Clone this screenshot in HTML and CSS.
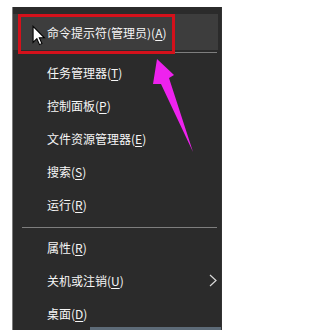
FILE: index.html
```html
<!DOCTYPE html>
<html>
<head>
<meta charset="utf-8">
<link rel="stylesheet" href="styles.css">
</head>
<body>
<div class="menu">
  <div class="item active"><span class="label">命令提示符(管理员)(<u>A</u>)</span></div>
  <div class="sep"></div>
  <div class="group">
    <div class="item"><span class="label">任务管理器(<u>T</u>)</span></div>
    <div class="item"><span class="label">控制面板(<u>P</u>)</span></div>
    <div class="item"><span class="label">文件资源管理器(<u>E</u>)</span></div>
    <div class="item"><span class="label">搜索(<u>S</u>)</span></div>
    <div class="item"><span class="label">运行(<u>R</u>)</span></div>
  </div>
  <div class="sep"></div>
  <div class="group">
    <div class="item"><span class="label">属性(<u>R</u>)</span></div>
    <div class="item"><span class="label">关机或注销(<u>U</u>)</span>
      <svg class="chev" width="8" height="13" viewBox="0 0 8 13"><polyline points="1,1 7,6.5 1,12" fill="none" stroke="#d8d8d8" stroke-width="1.2"/></svg>
    </div>
    <div class="item"><span class="label">桌面(<u>D</u>)</span></div>
  </div>
  <div class="taskbar"></div>
  <svg class="cursor" width="14" height="21" viewBox="0 0 13 19"><path d="M1 1 L1 16 L4.5 12.5 L7 18 L9.2 17 L6.8 11.6 L11.5 11.6 Z" fill="#fff" stroke="#000" stroke-width="1"/></svg>
  <div class="redbox"></div>
  <svg class="arrow" width="60" height="110" viewBox="0 0 60 110"><polygon points="12,4 29,20 24,23 48,97 16,29 8,29" fill="#ee22ee"/></svg>
</div>
</body>
</html>
```
FILE: styles.css
```css
html, body {
  margin: 0;
  padding: 0;
  background: #ffffff;
}
body {
  width: 235px;
  height: 335px;
  overflow: hidden;
  padding-top: 7px;
  box-sizing: border-box;
}
.menu {
  position: relative;
  margin-left: 12px;
  width: 210px;
  height: 323px;
  box-sizing: border-box;
  background: #2b2b2b;
  border-left: 1px solid #7c7c7c;
  border-right: 1px solid #333;
  padding-top: 7px;
  font-family: "Noto Sans CJK SC", "Noto Sans", sans-serif;
  font-size: 12px;
  color: #f6f6f6;
}
.item {
  display: flex;
  align-items: center;
  justify-content: space-between;
  height: 33px;
  padding-left: 34px;
  padding-right: 4px;
}
.item.active {
  height: 36px;
  background: #3d3d3d;
  margin-right: 3px;
}
.label u {
  text-underline-offset: 2px;
}
.sep {
  height: 1px;
  background: #7e7e7e;
  margin: 2px 4px 0 9px;
}
.group {
  padding: 3px 0 4px;
}
.group:last-of-type {
  padding-bottom: 0;
}
.chev {
  display: block;
}
.taskbar {
  position: absolute;
  left: 77px;
  right: 0;
  bottom: 0;
  height: 3px;
  background: #5d6b78;
}
.cursor {
  position: absolute;
  left: 19px;
  top: 18px;
}
.redbox {
  position: absolute;
  left: 5px;
  top: 7px;
  width: 157px;
  height: 40px;
  box-sizing: border-box;
  border: 3px solid #d4111b;
}
.arrow {
  position: absolute;
  left: 132px;
  top: 48px;
}
```
